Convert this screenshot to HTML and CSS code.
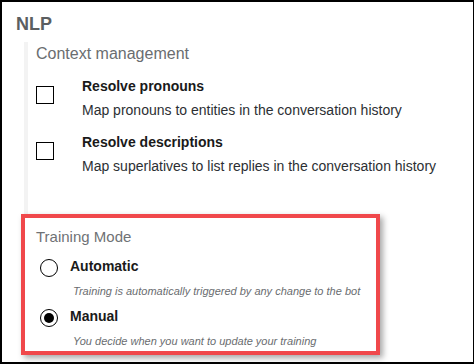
FILE: index.html
```html
<!DOCTYPE html>
<html lang="en">
<head>
<meta charset="utf-8">
<title>NLP settings</title>
<link rel="stylesheet" href="styles.css">
</head>
<body>
<div class="frame">
  <h1 class="title">NLP</h1>
  <section class="context">
    <h2 class="section-title">Context management</h2>
    <div class="item">
      <span class="checkbox"></span>
      <div class="item-text">
        <div class="item-title">Resolve pronouns</div>
        <div class="item-desc">Map pronouns to entities in the conversation history</div>
      </div>
    </div>
    <div class="item">
      <span class="checkbox"></span>
      <div class="item-text">
        <div class="item-title">Resolve descriptions</div>
        <div class="item-desc">Map superlatives to list replies in the conversation history</div>
      </div>
    </div>
  </section>
  <section class="training">
    <h2 class="training-title">Training Mode</h2>
    <div class="option">
      <div class="option-row">
        <span class="radio"></span>
        <span class="option-title">Automatic</span>
      </div>
      <div class="option-desc">Training is automatically triggered by any change to the bot</div>
    </div>
    <div class="option">
      <div class="option-row">
        <span class="radio checked"></span>
        <span class="option-title">Manual</span>
      </div>
      <div class="option-desc">You decide when you want to update your training</div>
    </div>
  </section>
</div>
</body>
</html>
```

FILE: styles.css
```css
* { box-sizing: border-box; }

html, body {
  margin: 0;
  padding: 0;
  background: #fff;
}

body {
  font-family: "Liberation Sans", Arial, sans-serif;
}

.frame {
  width: 474px;
  height: 364px;
  border-style: solid;
  border-color: #000;
  border-width: 2px 1px 2px 2px;
  padding-top: 11px;
  overflow: hidden;
}

.title {
  margin: 0 0 0 14px;
  font-size: 18px;
  line-height: 22px;
  font-weight: bold;
  color: #5b5e61;
}

.context {
  margin: 7px 0 0 22px;
  border-left: 4px solid #f3f3f3;
  padding: 2px 0 39px 8px;
  display: flex;
  flex-direction: column;
}

.section-title {
  margin: 0;
  font-size: 16px;
  line-height: 20px;
  font-weight: normal;
  color: #6a6d70;
}

.item {
  display: flex;
  align-items: flex-start;
  margin-top: 13px;
}

.item + .item {
  margin-top: 14px;
}

.checkbox {
  width: 18px;
  height: 18px;
  border: 1px solid #000;
  margin-top: 9px;
  margin-right: 28px;
  flex: none;
}

.item-title {
  font-size: 14px;
  line-height: 18px;
  font-weight: bold;
  color: #1a1a1a;
  margin-bottom: 6px;
}

.item-desc {
  font-size: 14px;
  line-height: 18px;
  color: #2c2f33;
}

.training {
  margin-left: 19px;
  width: 359px;
  height: 141px;
  border: 4px solid #f0484b;
  box-shadow: 3px 3px 6px rgba(0, 0, 0, 0.35);
  padding: 9px 0 0 11px;
  background: #fff;
}

.training-title {
  margin: 0;
  font-size: 15px;
  line-height: 20px;
  font-weight: normal;
  color: #6f7275;
}

.option {
  margin-top: 10px;
}

.option + .option {
  margin-top: 9px;
}

.option-row {
  display: flex;
  align-items: flex-start;
}

.radio {
  width: 18px;
  height: 18px;
  border: 1px solid #000;
  border-radius: 50%;
  margin: 2px 12px 0 4px;
  flex: none;
  display: flex;
  align-items: center;
  justify-content: center;
}

.radio.checked::after {
  content: "";
  width: 10px;
  height: 10px;
  border-radius: 50%;
  background: #000;
}

.option-title {
  font-size: 14px;
  line-height: 18px;
  font-weight: bold;
  color: #1a1a1a;
}

.option-desc {
  margin: 7px 0 0 37px;
  font-size: 11px;
  line-height: 14px;
  font-style: italic;
  color: #6a6d70;
}
```
